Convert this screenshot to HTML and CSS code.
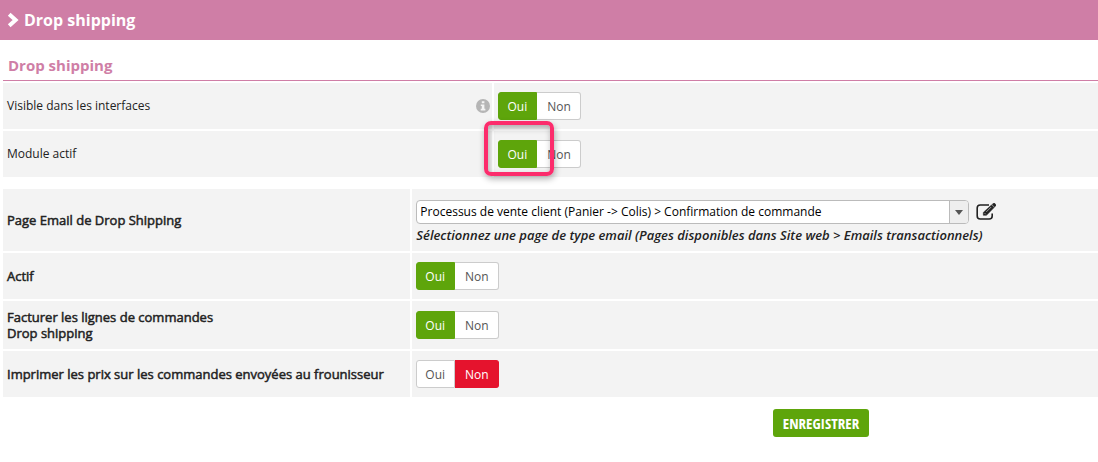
FILE: index.html
```html
<!DOCTYPE html>
<html lang="fr">
<head>
<meta charset="utf-8">
<meta name="viewport" content="width=device-width, initial-scale=1">
<title>Drop shipping</title>
<link rel="stylesheet" href="styles.css">
</head>
<body>
<header class="page-header">
  <svg class="chevron" viewBox="0 0 12 16" aria-hidden="true"><path d="M2.200 2.200 8.600 8l-6.400 5.800" fill="none" stroke="#fff" stroke-width="4"/></svg>
  <h1>Drop shipping</h1>
</header>
<main>
  <form class="settings">
    <h2>Drop shipping</h2>
    <section class="group group-module">
      <div class="row">
        <div class="cell name top" id="l-visible"><span>Visible dans les interfaces</span>
          <svg class="info" viewBox="0 0 14 14" role="img" aria-label="Information"><circle cx="7" cy="7" r="7" fill="#b5b5b5"/><path d="M5.800 2.300h2.600v2H5.800zM4.800 5.400h3.600v4.400h1v1.700H4.700V9.800h1.100V7.100h-1z" fill="#f3f3f3"/></svg>
        </div>
        <div class="cell"><div class="toggle" role="radiogroup" aria-labelledby="l-visible">
          <input type="radio" name="visible" id="visible-1" checked><label class="yes" for="visible-1">Oui</label>
          <input type="radio" name="visible" id="visible-0"><label class="no" for="visible-0">Non</label>
        </div></div>
      </div>
      <div class="row">
        <div class="cell name" id="l-module">Module actif</div>
        <div class="cell"><div class="toggle" role="radiogroup" aria-labelledby="l-module">
          <input type="radio" name="module" id="module-1" checked><label class="yes" for="module-1">Oui</label>
          <input type="radio" name="module" id="module-0"><label class="no" for="module-0">Non</label>
          <span class="highlight"></span>
        </div></div>
      </div>
    </section>
    <section class="group group-options">
      <div class="row">
        <div class="cell name"><label for="page-email">Page Email de Drop Shipping</label></div>
        <div class="cell page-cell">
          <div class="picker">
            <div class="select-box">
              <select id="page-email"><option>Processus de vente client (Panier -&gt; Colis) &gt; Confirmation de commande</option></select>
              <span class="arrow"></span>
            </div>
            <button class="edit" type="button" aria-label="Modifier la page">
              <svg viewBox="0 0 20 18" aria-hidden="true"><path d="M13 2H4.200C2.400 2 1.200 3.200 1.200 5v8c0 1.800 1.200 3 3 3h9c1.800 0 3-1.200 3-3v-2.500" fill="none" stroke="#222" stroke-width="1.600"/><path d="M16.100 1.400 17.300.4c.5-.4 1-.4 1.500 0l1 1.100c.4.500.4 1-.1 1.400l-1.200 1.100zM15.500 1.900l2.600 2.700-7.600 7.700H7.300V9.400z" fill="#222" stroke="#222" stroke-width=".5"/><path d="m10.300 8.900 4.900-4.900M8.600 10.100l1.200 1.200" stroke="#f3f3f3" stroke-width=".6"/></svg>
            </button>
          </div>
          <p class="hint">Sélectionnez une page de type email (Pages disponibles dans Site web &gt; Emails transactionnels)</p>
        </div>
      </div>
      <div class="row">
        <div class="cell name" id="l-actif">Actif</div>
        <div class="cell"><div class="toggle" role="radiogroup" aria-labelledby="l-actif">
          <input type="radio" name="actif" id="actif-1" checked><label class="yes" for="actif-1">Oui</label>
          <input type="radio" name="actif" id="actif-0"><label class="no" for="actif-0">Non</label>
        </div></div>
      </div>
      <div class="row">
        <div class="cell name" id="l-facturer">Facturer les lignes de commandes<br>Drop shipping</div>
        <div class="cell"><div class="toggle" role="radiogroup" aria-labelledby="l-facturer">
          <input type="radio" name="facturer" id="facturer-1" checked><label class="yes" for="facturer-1">Oui</label>
          <input type="radio" name="facturer" id="facturer-0"><label class="no" for="facturer-0">Non</label>
        </div></div>
      </div>
      <div class="row">
        <div class="cell name" id="l-prix">Imprimer les prix sur les commandes envoyées au frounisseur</div>
        <div class="cell"><div class="toggle" role="radiogroup" aria-labelledby="l-prix">
          <input type="radio" name="prix" id="prix-1"><label class="yes" for="prix-1">Oui</label>
          <input type="radio" name="prix" id="prix-0" checked><label class="no" for="prix-0">Non</label>
        </div></div>
      </div>
    </section>
    <div class="actions"><button class="save" type="submit">ENREGISTRER</button></div>
  </form>
</main>
</body>
</html>
```

FILE: styles.css
```css
* { box-sizing: border-box; }
body {
  margin: 0;
  background: #fff;
  color: #222;
  font: 12px/16px "Open Sans", "Noto Sans", sans-serif;
}
h1, h2, p { margin: 0; }
.page-header {
  display: flex;
  align-items: center;
  gap: 5px;
  height: 40px;
  padding: 0 7px;
  background: #cf7ea6;
  color: #fff;
}
.page-header h1 { font-size: 16px; line-height: 24px; font-weight: 700; }
.chevron { width: 12px; height: 16px; }
.settings { padding-left: 3px; }
.settings h2 {
  padding: 15px 5px 5px;
  border-bottom: 1px solid #cf7ea6;
  color: #cf7ea6;
  font-size: 15px;
  line-height: 20px;
  font-weight: 700;
}
.group { display: grid; gap: 2px; }
.group-module { margin-top: 2px; }
.group-options { margin-top: 12px; }
.row { display: grid; gap: 2px; min-height: 46px; }
.group-module .row { grid-template-columns: 44.7% 1fr; }
.group-options .row { grid-template-columns: 37.2% 1fr; }
.cell {
  display: flex;
  align-items: center;
  padding: 8px 4px;
  background: #f3f3f3;
}
.group-options .name {
  font-size: 13px;
  -webkit-text-stroke: 0.5px #222;
}
.name.top { justify-content: space-between; padding-right: 2px; }
.info { width: 14px; height: 14px; }
.toggle { position: relative; display: flex; }
.toggle input {
  position: absolute;
  opacity: 0;
  margin: 0;
}
.toggle label {
  height: 28px;
  border: 1px solid #ccc;
  background: #fff;
  color: #555;
  line-height: 27px;
  cursor: pointer;
}
.toggle .yes { padding: 0 9px 0 8px; border-radius: 3px 0 0 3px; }
.toggle .no { padding: 0 9px 0 10px; border-left: 0; border-radius: 0 3px 3px 0; }
.toggle input:checked + .yes { background: #5ea50b; border-color: #5ea50b; color: #fff; }
.toggle input:checked + .no { background: #e5132d; border-color: #e5132d; color: #fff; }
.highlight {
  position: absolute;
  left: -14px;
  top: -19px;
  width: 70px;
  height: 55px;
  border: 4px solid #fc2c6c;
  border-radius: 7px;
  box-shadow: 1px 3px 6px rgba(0, 0, 0, 0.3), inset 1px 3px 6px rgba(0, 0, 0, 0.3);
  pointer-events: none;
}
.page-cell {
  flex-direction: column;
  align-items: stretch;
  justify-content: center;
  gap: 3px;
  padding: 11px 4px 8px;
}
.picker { display: flex; align-items: center; gap: 7px; }
.select-box { position: relative; flex: 0 1 553px; }
.select-box select {
  display: block;
  width: 100%;
  height: 24px;
  padding: 0 24px 0 3px;
  appearance: none;
  border: 1px solid #bbb;
  border-radius: 4px;
  background: #fff;
  color: #000;
  font: inherit;
}
.arrow {
  position: absolute;
  top: 1px;
  right: 1px;
  bottom: 1px;
  width: 19px;
  display: grid;
  place-items: center;
  border-left: 1px solid #bbb;
  border-radius: 0 3px 3px 0;
  background: #eee;
  pointer-events: none;
}
.arrow::before {
  content: "";
  border: 4px solid transparent;
  border-top: 5px solid #555;
  border-bottom: 0;
}
.edit { padding: 0; border: 0; background: none; cursor: pointer; }
.edit svg { display: block; width: 20px; height: 18px; }
.hint { font-size: 13px; font-style: italic; font-weight: 600; }
.actions { display: flex; justify-content: center; padding: 12px 0 16px 541px; }
.save {
  height: 28px;
  padding: 0 10px;
  border: 0;
  border-radius: 3px;
  background: #5ea50b;
  color: #fff;
  font: 700 15px/28px "Open Sans Condensed", "Open Sans", sans-serif;
  cursor: pointer;
}
```
